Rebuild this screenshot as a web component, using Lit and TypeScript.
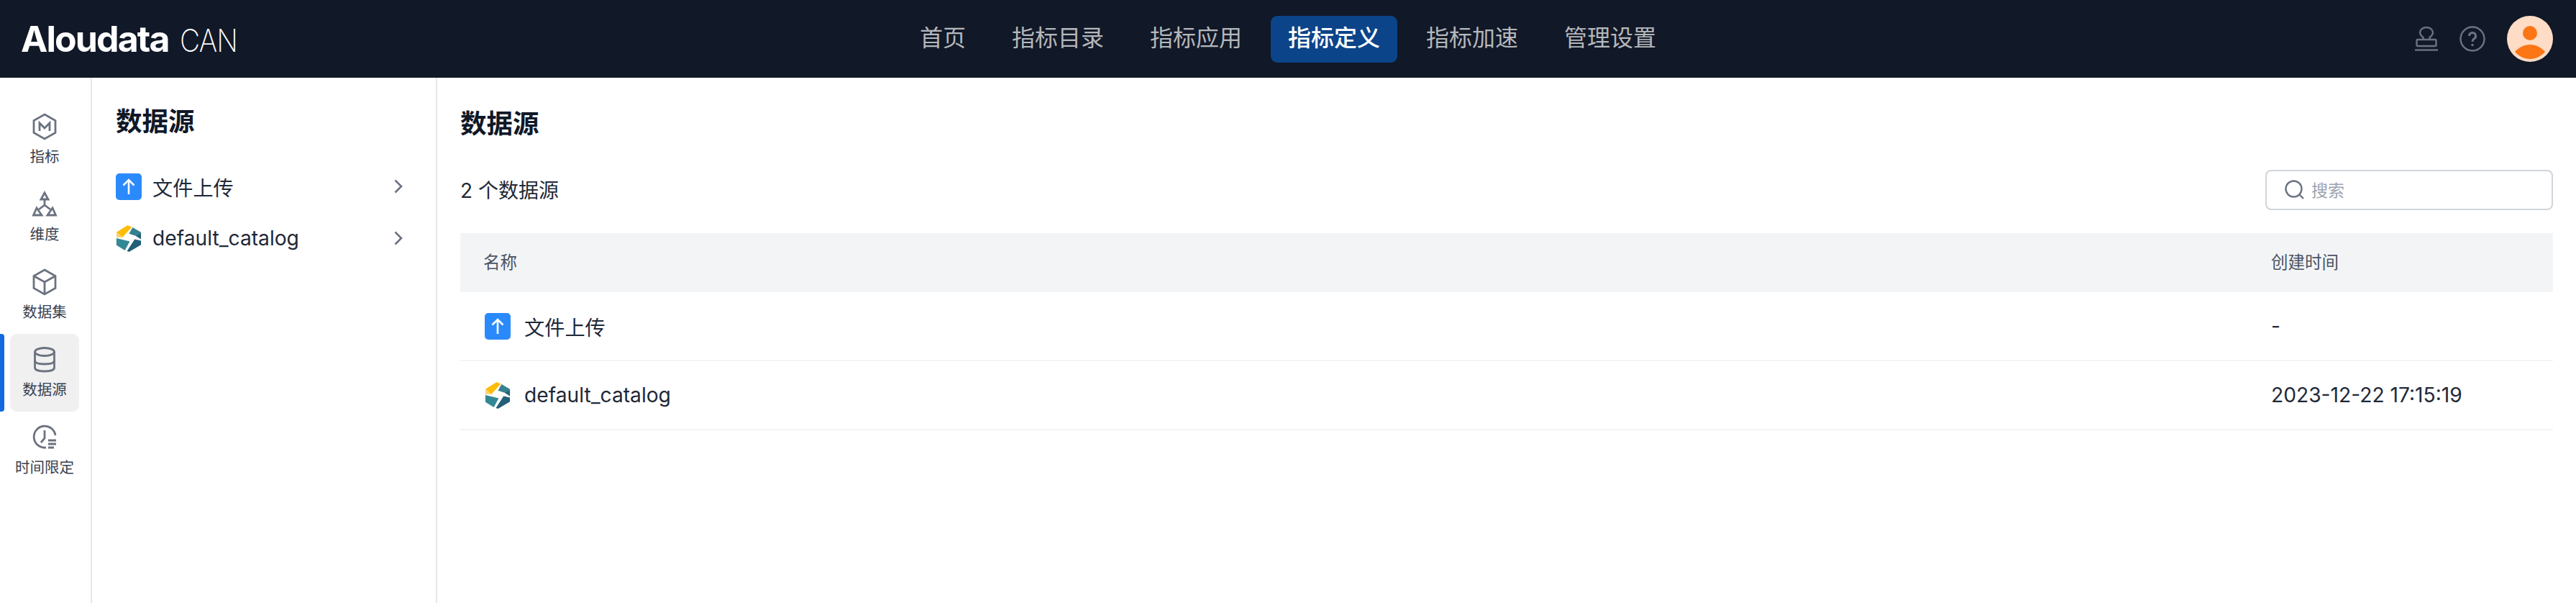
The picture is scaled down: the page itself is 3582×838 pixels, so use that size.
import { css, html, LitElement, svg, TemplateResult } from "lit";
import { customElement } from "lit/decorators.js";

const railIcons: Record<string, TemplateResult> = {
  metric: svg`<path d="M18 2 L33 10.5 V27.5 L18 36 L3 27.5 V10.5 Z" /><path d="M11 25 V14 L18 21 L25 14 V25" />`,
  dimension: svg`<path d="M18 3 L23 12 H13 Z" /><path d="M18 12 V20 M18 20 L10 26 M18 20 L26 26" /><path d="M2.5 34 L7 24 L14 34 Z" /><path d="M22 34 L29 24 L33.5 34 Z" />`,
  dataset: svg`<path d="M18 2 L33 10.5 V27.5 L18 36 L3 27.5 V10.5 Z" /><path d="M3 10.5 L18 19 L33 10.5 M18 19 V36" />`,
  source: svg`<ellipse cx="18" cy="8" rx="13.5" ry="5.5" /><path d="M4.5 8 V30 C4.5 33 10 35 18 35 C26 35 31.5 33 31.5 30 V8" /><path d="M4.5 20 C4.5 23.5 10 25 18 25 C26 25 31.5 23.5 31.5 20" />`,
  time: svg`<path d="M33 16 A15 15 0 1 0 20 33" /><path d="M18 9 V20 L13 26" /><path d="M23 23 H34 M23 28 H34 M23 33 H31" />`,
};

const rail = [
  ["指标", "metric"],
  ["维度", "dimension"],
  ["数据集", "dataset"],
  ["数据源", "source"],
  ["时间限定", "time"],
];

const nav = ["首页", "指标目录", "指标应用", "指标定义", "指标加速", "管理设置"];

const uploadIcon = html`<svg class="src" viewBox="0 0 36 37">
  <rect width="36" height="37" rx="5" fill="#2b8afb" />
  <path d="M18 29 V9 M10.5 16.5 L18 9 L25.5 16.5" fill="none" stroke="#fff" stroke-width="2.6" />
</svg>`;

const catalogIcon = html`<svg class="src" viewBox="0 0 36 38">
  <path d="M0.5 10 L16.5 0 L22.5 2.5 L9 17.5 Z" fill="#fdbd0a" />
  <path d="M0.5 10 L9 17.5 H0.5 Z" fill="#f6d477" />
  <path d="M23.5 3 L35.5 10 V13 L27 15 L18.5 12 Z" fill="#34818f" />
  <path d="M27.5 15 L35.5 12 V20 Z" fill="#236378" />
  <path d="M35.5 22 V28 L18.5 38 L15.5 37 L26.5 20 Z" fill="#225f78" />
  <path d="M0.5 18.5 L19.5 23 L12.5 36 L0.5 28.5 Z" fill="#348896" />
</svg>`;

@customElement("app-root")
export class AppRoot extends LitElement {
  static styles = css`
    :host {
      display: block;
      height: 838px;
      overflow: hidden;
      background: #fff;
      font-family: Inter, "Noto Sans CJK SC", sans-serif;
      color: #1f2937;
    }

    .topbar {
      display: grid;
      grid-template-columns: 1fr auto 1fr;
      align-items: center;
      height: 108px;
      background: #111827;
    }

    .logo {
      display: flex;
      align-items: baseline;
      padding-left: 29px;
      color: #fff;
      line-height: 1;
    }

    .logo b {
      font-size: 50px;
      font-weight: 700;
      letter-spacing: -1.9px;
    }

    .logo span {
      margin-left: 15px;
      font-size: 44px;
      font-weight: 200;
      letter-spacing: -1px;
      transform: scaleX(0.88);
      transform-origin: left;
    }

    .nav {
      display: flex;
      gap: 16px;
    }

    .nav div {
      height: 65px;
      padding: 0 24px;
      border-radius: 9px;
      font-size: 32px;
      line-height: 61px;
      color: #b5b7bb;
    }

    .nav div.active {
      background: #0b4489;
      color: #fff;
      font-weight: 500;
    }

    .tools {
      display: flex;
      justify-content: flex-end;
      align-items: center;
      padding-right: 32px;
    }

    .tools svg {
      fill: none;
      stroke: #6b7280;
      stroke-width: 2.4;
    }

    .stamp {
      width: 32px;
      height: 34px;
      margin-right: 30px;
    }

    .help {
      width: 36px;
      height: 36px;
      margin-right: 30px;
    }

    .tools svg.avatar {
      width: 64px;
      height: 64px;
      stroke: none;
    }

    .body {
      display: flex;
      height: 730px;
    }

    .rail {
      box-sizing: border-box;
      flex: none;
      width: 128px;
      padding-top: 32px;
      border-right: 2px solid #e5e7eb;
    }

    .rail-item {
      position: relative;
      display: flex;
      flex-direction: column;
      align-items: center;
      box-sizing: border-box;
      width: 96px;
      height: 108px;
      margin-left: 14px;
      padding-top: 17px;
      border-radius: 9px;
      font-size: 20.5px;
      line-height: 30px;
      color: #374151;
    }

    .rail-item svg {
      width: 36px;
      height: 38px;
      margin-bottom: 8px;
      fill: none;
      stroke: #6b7280;
      stroke-width: 2.8;
    }

    .rail-item span {
      white-space: nowrap;
    }

    .rail-item.active {
      background: #f0f0f0;
    }

    .rail-item.active::before {
      content: "";
      position: absolute;
      left: -14px;
      top: 0;
      bottom: 0;
      width: 6px;
      border-radius: 0 4px 4px 0;
      background: #1269e2;
    }

    .panel {
      box-sizing: border-box;
      flex: none;
      width: 480px;
      padding: 0 46px 0 33px;
      border-right: 2px solid #e5e7eb;
    }

    .panel h2 {
      margin: 39px 0 32px;
      font-size: 36.5px;
      font-weight: 600;
      line-height: 44px;
      color: #111827;
    }

    .menu-row {
      display: flex;
      align-items: center;
      height: 72px;
      font-size: 28.2px;
    }

    .menu-row span {
      flex: 1;
      margin-left: 15px;
    }

    .menu-row .chev {
      width: 12px;
      height: 20px;
      fill: none;
      stroke: #6b7280;
      stroke-width: 2.6;
    }

    .src {
      flex: none;
      width: 36px;
      height: 37px;
    }

    .main {
      flex: 1;
      min-width: 0;
      padding: 0 32px;
    }

    .main h1 {
      margin: 43px 0 0;
      font-size: 36.5px;
      font-weight: 600;
      line-height: 42px;
      color: #111827;
    }

    .toolbar {
      display: flex;
      justify-content: space-between;
      align-items: center;
      height: 56px;
      margin-top: 43px;
      font-size: 28px;
      color: #1f2937;
    }

    .toolbar > span {
      margin-bottom: 3px;
    }

    .search {
      display: flex;
      align-items: center;
      box-sizing: border-box;
      width: 400px;
      height: 56px;
      padding: 0 0 2px 25px;
      border: 2px solid #d1d5db;
      border-radius: 8px;
      font-size: 23px;
      color: #9ca3af;
    }

    .search svg {
      width: 27px;
      height: 27px;
      margin-right: 10px;
      fill: none;
      stroke: #6b7280;
      stroke-width: 2.4;
    }

    .table {
      margin-top: 32px;
    }

    .thead,
    .row {
      display: grid;
      grid-template-columns: 2486px 1fr;
      align-items: center;
      padding-left: 32px;
    }

    .thead {
      box-sizing: border-box;
      height: 82px;
      padding-bottom: 5px;
      background: #f3f4f6;
      font-size: 23.5px;
      color: #4b5563;
    }

    .row {
      height: 94px;
      border-bottom: 2px solid #f3f4f6;
      font-size: 28.2px;
    }

    .name {
      display: flex;
      align-items: center;
      gap: 19px;
      margin-left: 2px;
    }
  `;

  render() {
    return html`
      <div class="topbar">
        <div class="logo"><b>Aloudata</b><span>CAN</span></div>
        <div class="nav">
          ${nav.map(
            (n) => html`<div class="${n === "指标定义" ? "active" : ""}">${n}</div>`
          )}
        </div>
        <div class="tools">
          <svg class="stamp" viewBox="0 0 32 34">
            <path d="M11.5 18 V15 C9 13 7 11 7 8.5 A9 7.5 0 0 1 25 8.5 C25 11 23 13 20.5 15 V18" />
            <rect x="2.5" y="18" width="27" height="9" rx="1.5" />
            <path d="M0 32.5 H32" />
          </svg>
          <svg class="help" viewBox="0 0 36 36">
            <circle cx="18" cy="18" r="16.5" />
            <path d="M13.5 14 A4.5 4.5 0 1 1 20 18 C18.5 19 18 20 18 22" stroke-width="3" />
            <path d="M18 25 V28" stroke-width="3" />
          </svg>
          <svg class="avatar" viewBox="0 0 64 64">
            <circle cx="32" cy="32" r="32" fill="#fedcc6" />
            <circle cx="32" cy="24" r="10" fill="#fc7615" />
            <path d="M11 50 C16 44 24 40 32 40 C40 40 48 44 53 50 C48 56 40 60 32 60 C24 60 16 56 11 50 Z" fill="#fc7615" />
          </svg>
        </div>
      </div>
      <div class="body">
        <div class="rail">
          ${rail.map(
            ([label, icon]) => html`
              <div class="rail-item ${label === "数据源" ? "active" : ""}">
                <svg viewBox="0 0 36 38">${railIcons[icon]}</svg>
                <span>${label}</span>
              </div>
            `
          )}
        </div>
        <div class="panel">
          <h2>数据源</h2>
          ${this.menuRow(uploadIcon, "文件上传")}
          ${this.menuRow(catalogIcon, "default_catalog")}
        </div>
        <div class="main">
          <h1>数据源</h1>
          <div class="toolbar">
            <span>2 个数据源</span>
            <div class="search">
              <svg viewBox="0 0 27 27">
                <circle cx="12.5" cy="12.5" r="11" />
                <path d="M20.5 20.5 L26 26" />
              </svg>
              搜索
            </div>
          </div>
          <div class="table">
            <div class="thead"><span>名称</span><span>创建时间</span></div>
            <div class="row">
              <div class="name">${uploadIcon}<span>文件上传</span></div>
              <span>-</span>
            </div>
            <div class="row">
              <div class="name">${catalogIcon}<span>default_catalog</span></div>
              <span>2023-12-22 17:15:19</span>
            </div>
          </div>
        </div>
      </div>
    `;
  }

  menuRow(icon: TemplateResult, label: string): TemplateResult {
    return html`
      <div class="menu-row">
        ${icon}
        <span>${label}</span>
        <svg class="chev" viewBox="0 0 12 20"><path d="M1.5 1.5 L10 10 L1.5 18.5" /></svg>
      </div>
    `;
  }
}
